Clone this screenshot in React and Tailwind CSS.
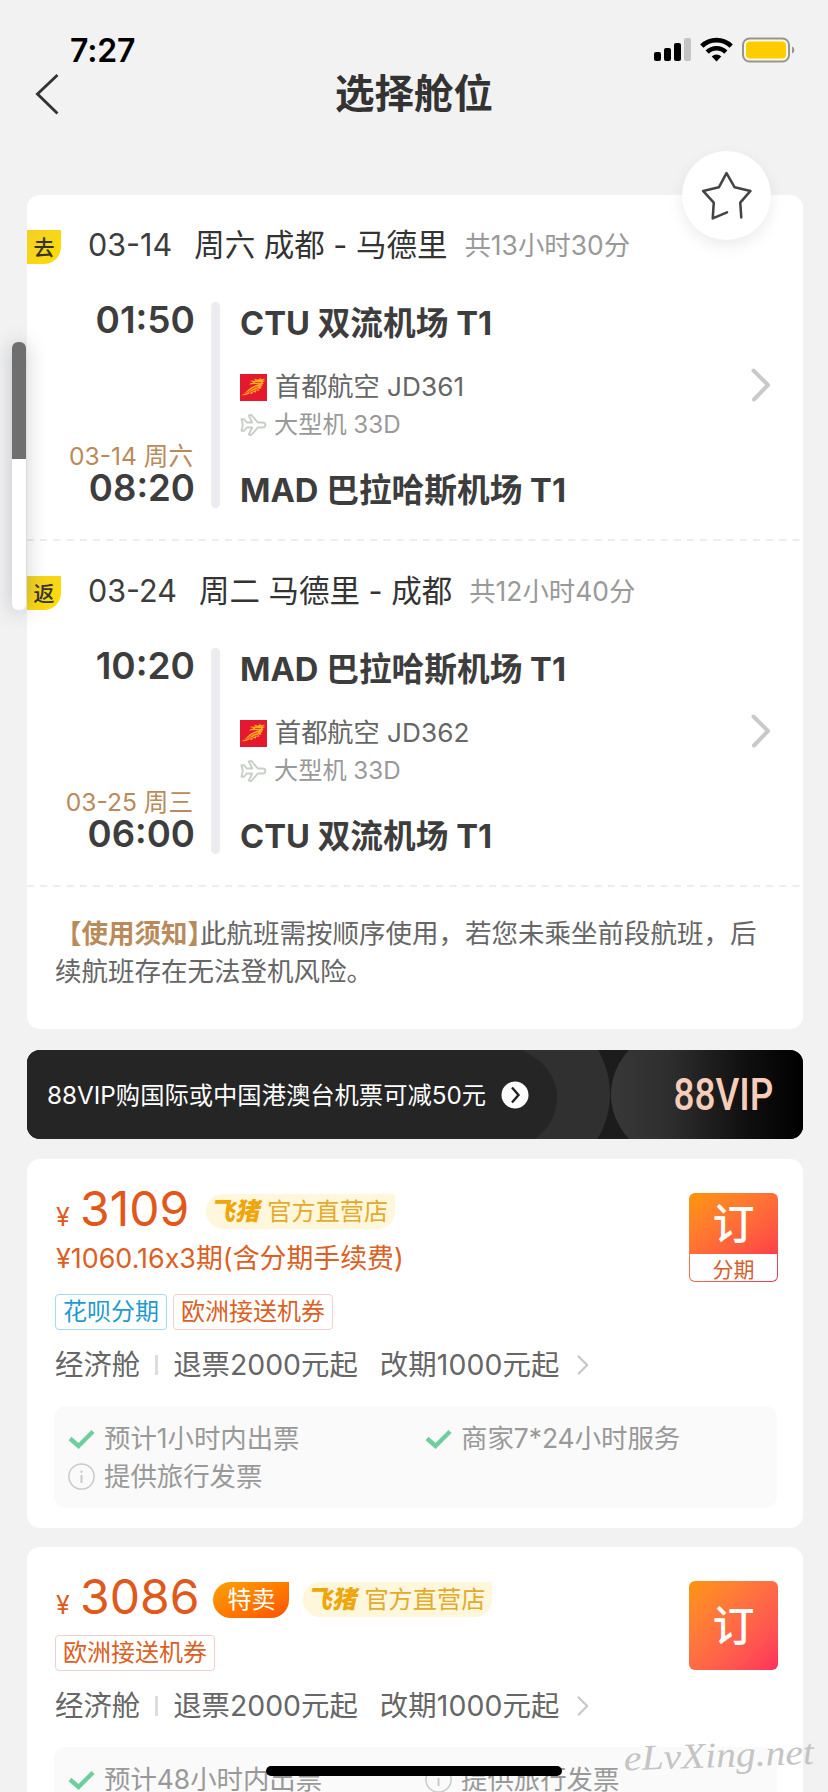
import React from 'react';

const legs = [
  {
    badge: '去',
    date: '03-14',
    day: '周六',
    route: '成都 - 马德里',
    duration: '共13小时30分',
    departTime: '01:50',
    departAirport: 'CTU 双流机场 T1',
    flight: '首都航空 JD361',
    plane: '大型机 33D',
    arriveDate: '03-14 周六',
    arriveTime: '08:20',
    arriveAirport: 'MAD 巴拉哈斯机场 T1'
  },
  {
    badge: '返',
    date: '03-24',
    day: '周二',
    route: '马德里 - 成都',
    duration: '共12小时40分',
    departTime: '10:20',
    departAirport: 'MAD 巴拉哈斯机场 T1',
    flight: '首都航空 JD362',
    plane: '大型机 33D',
    arriveDate: '03-25 周三',
    arriveTime: '06:00',
    arriveAirport: 'CTU 双流机场 T1'
  }
];

const offers = [
  {
    price: '3109',
    installment: '¥1060.16x3期(含分期手续费)',
    tags: [
      { label: '花呗分期', tone: 'blue' },
      { label: '欧洲接送机券', tone: 'orange' }
    ],
    services: [
      { label: '预计1小时内出票', icon: 'check' },
      { label: '商家7*24小时服务', icon: 'check' },
      { label: '提供旅行发票', icon: 'info' }
    ]
  },
  {
    price: '3086',
    onSale: true,
    tags: [{ label: '欧洲接送机券', tone: 'orange' }],
    services: [
      { label: '预计48小时内出票', icon: 'check' },
      { label: '提供旅行发票', icon: 'info' }
    ]
  }
];

const StatusBar = () => (
  <div className="flex h-[72px] items-start justify-between pl-[70px] pr-[33px] pt-[37px]">
    <span className="pt-px text-[32px] leading-[25px] font-semibold tracking-[-0.2px] text-black">7:27</span>
    <svg className="h-[26px] w-[142px]" viewBox="0 0 142 26">
      <rect x="1" y="15" width="7" height="9" rx="2" />
      <rect x="11" y="11" width="7" height="13" rx="2" />
      <rect x="21" y="6" width="7" height="18" rx="2" />
      <rect x="31" y="1" width="7" height="23" rx="2" fill="#c4c4c4" />
      <g fill="none" stroke="#000" strokeWidth="4.6">
        <path d="M48.8 9.2a20.8 20.8 0 0 1 29.4 0" />
        <path d="M54.2 15.1a13.2 13.2 0 0 1 18.6 0" />
      </g>
      <path d="M63.5 24.5l-4.8-4.9a6.8 6.8 0 0 1 9.6 0z" />
      <rect x="90" y="1.5" width="46" height="23" rx="6.5" fill="#fdfae8" stroke="#97958c" strokeWidth="2" />
      <rect x="93" y="4.5" width="40" height="17" rx="4" fill="#ffcc00" />
      <path d="M139 9.5c3 .8 3 6.2 0 7z" fill="#97958c" />
    </svg>
  </div>
);

const Header = () => (
  <div className="grid h-[123px] grid-cols-[1fr_auto_1fr] items-start">
    <svg className="ml-[34px] mt-px h-[42px] w-[26px]" viewBox="0 0 26 42" fill="none" stroke="#333" strokeWidth="2.9">
      <path d="M23.5 2L3.5 21l20 19.5" />
    </svg>
    <h1 className="pt-px text-[39.5px] leading-[42px] font-bold text-[#333]">选择舱位</h1>
    <span />
  </div>
);

const Chevron = ({ className }) => (
  <svg className={className} viewBox="0 0 20 34" fill="none" stroke="#c9c9c9" strokeWidth="4" strokeLinecap="round" strokeLinejoin="round">
    <path d="M2.5 2.5L17 17 3 31.5" />
  </svg>
);

const DashedLine = () => (
  <svg className="block h-[2px] w-full" viewBox="0 0 776 2">
    <line x1="0" y1="1" x2="776" y2="1" stroke="#ededed" strokeWidth="2" strokeDasharray="7 6.2" />
  </svg>
);

const AirlineLogo = () => (
  <svg className="h-[27px] w-[27px]" viewBox="0 0 27 27">
    <rect width="27" height="27" fill="#e4182e" />
    <path
      d="M1.5 21.5C5 19.5 7.500 16 11 13.500c2.500-1.800 5-2.500 8-3l-4-.500-6 .500c2-2 4-2.300 5.500-2.300L9.500 7c2.500-1 4.500-.500 6-.200L14 4.500l4 1.300 3-2.300-.800 2 4.800-1-2.500 2.300 3-.200-3.500 2.400 2 .500-2.800 1.500 2 1-3 .800 1.600 1.500-3 .700.500 1.800-3-.200-.500 2-2.500-.700-1.500 2.200-2.500-.800c-2.500 2-5.800 2.200-8.800 2z"
      fill="#ffae1f"
    />
    <path d="M4 20c5-1.500 6-5 14-7.500M9 18.500c3-.500 5-2.500 10-4M15 8.500l6 .2" fill="none" stroke="#e4182e" strokeWidth=".8" />
  </svg>
);

const PlaneIcon = () => (
  <svg className="h-[24px] w-[27px]" viewBox="0 0 27 24" fill="none" stroke="#c8cfc6" strokeWidth="1.9" strokeLinejoin="round">
    <path d="M1.500 6.200H4l2.800 3.300h5.400L8.800 2.500l2.400-.700 6.600 7.700h5c3.400 0 3.400 5 0 5h-5l-6.600 7.700-2.400-.700 3.400-7H6.800L4 17.800H1.500L2.800 12z" />
  </svg>
);

const FlightLeg = ({ leg }) => (
  <section className="flex h-[309px] flex-col">
    <div className="flex h-[34px] items-center whitespace-nowrap">
      <span className="flex h-[34px] w-[34px] items-center justify-center rounded-br-[17px] bg-gradient-to-br from-[#f3d021] to-[#ffdc00] text-[21px] leading-none font-medium text-[#333]">
        {leg.badge}
      </span>
      <div className="-mt-[4px] flex items-center leading-[34px]">
        <span className="ml-[27px] text-[30.5px] text-[#3d3d3d]">{leg.date}</span>
        <span className="ml-[22px] text-[30.5px] text-[#333]">
          {leg.day} {leg.route}
        </span>
        <span className="ml-[17px] text-[26.4px] text-[#999]">{leg.duration}</span>
      </div>
    </div>

    <div className="mt-[38px] flex h-[206px] pr-[32px]">
      <div className="flex w-[168px] flex-col items-end justify-between whitespace-nowrap pb-[4px]">
        <span className="text-[37px] leading-[36px] font-semibold text-[#3d3d3d]">{leg.departTime}</span>
        <div className="flex flex-col items-end">
          <span className="mr-[2px] text-[24.6px] leading-[34px] text-[#b98a5a]">{leg.arriveDate}</span>
          <span className="text-[36.6px] leading-[31px] font-semibold text-[#3d3d3d]">{leg.arriveTime}</span>
        </div>
      </div>
      <div className="ml-[16px] w-[9px] rounded-full bg-[#ebecf0]" />
      <div className="ml-[20px] flex flex-col whitespace-nowrap pt-[2px]">
        <span className="h-[38px] text-[32.7px] leading-[38px] font-bold text-[#3d3d3d]">{leg.departAirport}</span>
        <div className="mt-[26px] flex h-[38px] items-center gap-[8px]">
          <AirlineLogo />
          <span className="text-[26.2px] leading-[38px] text-[#666]">{leg.flight}</span>
        </div>
        <div className="flex h-[38px] items-center gap-[7px]">
          <PlaneIcon />
          <span className="text-[24.2px] leading-[38px] text-[#999]">{leg.plane}</span>
        </div>
        <span className="mt-[27px] h-[38px] text-[32.7px] leading-[38px] font-bold text-[#3d3d3d]">{leg.arriveAirport}</span>
      </div>
      <Chevron className="ml-auto mt-[66px] h-[34px] w-[20px]" />
    </div>
  </section>
);

const VipBanner = () => (
  <div className="relative mt-[21px] flex h-[89px] items-center overflow-hidden rounded-[13px] bg-[#1c1c1c]">
    <svg className="absolute inset-0 h-full w-full" viewBox="0 0 776 89">
      <defs>
        <linearGradient id="vipShine" x1="0" x2="1">
          <stop offset="0" stopColor="#383838" />
          <stop offset="0.3" stopColor="#2e2e2e" />
          <stop offset="0.7" stopColor="#101010" />
          <stop offset="1" stopColor="#000" />
        </linearGradient>
      </defs>
      <circle cx="496" cy="44" r="87" fill="#303030" />
      <path d="M0 0h494c20 8 36 25 36 47 0 17-8 32-22 42H0z" fill="#252525" />
      <path d="M602 0h174v89H602c-24-26-24-63 0-89z" fill="url(#vipShine)" />
    </svg>
    <span className="relative ml-[20px] whitespace-nowrap text-[24.3px] leading-[34px] text-white">
      88VIP购国际或中国港澳台机票可减50元
    </span>
    <svg className="relative ml-[15px] h-[28px] w-[28px]" viewBox="0 0 28 28">
      <circle cx="14" cy="14" r="13.5" fill="#fff" />
      <path d="M11 6.500l6.500 7.500-6.500 7.500" fill="none" stroke="#222" strokeWidth="2.4" />
    </svg>
    <span className="relative ml-auto mr-[30px] flex w-[102px] justify-end">
      <span className="origin-right scale-x-[0.83] text-[44.5px] leading-[60px] font-medium text-[#f6cdb9] font-[Roboto,sans-serif]">
        88VIP
      </span>
    </span>
  </div>
);

const ShopBadge = () => (
  <span className="flex h-[35px] w-[189px] items-center rounded-l-[17px] rounded-br-[17px] bg-[#fef7dc] pl-[6px]">
    <span className="inline-block w-[49px] -skew-x-12 text-[24.5px] leading-[35px] font-black text-[#efa50c]">
      飞猪
    </span>
    <span className="ml-[6px] text-[24.2px] leading-[35px] text-[#e5aa2c]">官方直营店</span>
  </span>
);

const Tag = ({ tag }) => (
  <span
    className={`flex h-[36px] items-center rounded-[4px] border px-[7px] text-[24px] leading-[34px]
      ${tag.tone === 'blue' ? 'border-[#a5d8ea] text-[#1f9bd0]' : 'border-[#f3cfcf] text-[#dc5f24]'}`}
  >
    {tag.label}
  </span>
);

const CheckIcon = () => (
  <svg className="h-[27px] w-[27px]" viewBox="0 0 27 27" fill="none" stroke="#6fcf9c" strokeWidth="4.4">
    <path d="M2 13.500l8.500 7.500L25 6.500" />
  </svg>
);

const InfoIcon = () => (
  <svg className="h-[27px] w-[27px]" viewBox="0 0 27 27" fill="none" stroke="#c6cbc9" strokeWidth="1.5">
    <circle cx="13.5" cy="13.5" r="12.6" />
    <path d="M13.500 12v8M13.500 7.500v2.200" strokeWidth="2" />
  </svg>
);

const BookButton = ({ installment }) => {
  if (!installment) {
    return (
      <button className="flex h-[89px] w-[89px] items-center justify-center rounded-[6px] bg-gradient-to-br from-[#ff9500] to-[#ff2e5b] text-[42px] leading-none font-medium text-white">
        订
      </button>
    );
  }
  return (
    <button className="flex h-[89px] w-[89px] flex-col rounded-[6px] bg-gradient-to-br from-[#ff9500] to-[#f0305a] p-px">
      <span className="flex h-[60px] w-full items-center justify-center rounded-t-[5px] bg-gradient-to-br from-[#ff9500] to-[#ff3e47] text-[42px] leading-none font-medium text-white">
        订
      </span>
      <span className="flex h-[27px] w-full items-center justify-center rounded-b-[5px] bg-white pt-[4px] text-[21px] leading-none text-[#d4602c]">
        分期
      </span>
    </button>
  );
};

const OfferCard = ({ offer }) => (
  <section className="rounded-[13px] bg-white px-[27px] pb-[20px] pt-[25px]">
    <div className="flex justify-between">
      <div>
        <div className="flex h-[52px] items-center pl-[2px] text-[#e0591b]">
          <span className="mt-[14px] w-[24px] text-[25px] leading-[26px]">¥</span>
          <span className="-mt-[2px] text-[48px] leading-[52px]">{offer.price}</span>
          {offer.onSale && (
            <span className="ml-[14px] mt-[3px] flex h-[36px] w-[76px] items-center justify-center rounded-l-[18px] rounded-br-[18px] bg-gradient-to-br from-[#ffa000] to-[#ff5000] text-[24px] text-white">
              特卖
            </span>
          )}
          <span className={`mt-[3px] ${offer.onSale ? 'ml-[14px]' : 'ml-[17px]'}`}>
            <ShopBadge />
          </span>
        </div>
        {offer.installment && (
          <div className="mt-[3px] pl-[2px] text-[26.9px] leading-[38px] text-[#dc5f24] [font-feature-settings:'calt'_0]">
            {offer.installment}
          </div>
        )}
        <div className={`flex gap-[6px] pl-px ${offer.installment ? 'mt-[17px]' : 'mt-[11px]'}`}>
          {offer.tags.map((tag) => (
            <Tag key={tag.label} tag={tag} />
          ))}
        </div>
      </div>
      <div className="-mr-[2px] mt-[9px]">
        <BookButton installment={offer.installment} />
      </div>
    </div>

    <div className="mt-[16px] flex h-[38px] items-center pl-px text-[28.4px] text-[#666]">
      <span>经济舱</span>
      <span className="mx-[15px] h-[20px] w-[3px] bg-[#ddd]" />
      <span>退票2000元起</span>
      <span className="ml-[22px] tracking-[0.1px]">改期1000元起</span>
      <Chevron className="ml-[18px] h-[20px] w-[12px]" />
    </div>

    <div className="mt-[22px] grid h-[102px] w-[723px] grid-cols-[357px_1fr] content-start rounded-[12px] bg-[#fafafa] pl-[14px] pt-[13px]">
      {offer.services.map((service) => (
        <div
          key={service.label}
          className="flex h-[38px] items-center gap-[9px] text-[26.4px] leading-[38px] text-[#999] [font-feature-settings:'calt'_0]"
        >
          {service.icon === 'check' ? <CheckIcon /> : <InfoIcon />}
          <span>{service.label}</span>
        </div>
      ))}
    </div>
  </section>
);

export default function App() {
  return (
    <div className="relative h-[1792px] w-[828px] overflow-hidden bg-[#f2f2f2] font-['Inter','Noto_Sans_CJK_SC',sans-serif]">
      <StatusBar />
      <Header />

      <main className="pl-[27px] pr-[25px]">
        <div className="relative h-[834px] rounded-[13px] bg-white pt-[35px]">
          {legs.map((leg, i) => (
            <div key={leg.badge} className={i > 0 ? 'pt-[35px]' : ''}>
              <FlightLeg leg={leg} />
              <DashedLine />
            </div>
          ))}
          <p className="mt-[27px] whitespace-nowrap pl-[28px] text-[26.5px] leading-[38px] text-[#666]">
            <span className="font-bold text-[#b98a5a]">【使用须知】</span>
            <span className="-ml-[14px]">此航班需按顺序使用，若您未乘坐前段航班，后</span>
            <br />
            续航班存在无法登机风险。
          </p>
          <button className="absolute -top-[44px] left-[655px] flex h-[89px] w-[89px] items-center justify-center rounded-full bg-white shadow-[0_6px_16px_rgba(0,0,0,0.08)]">
            <svg className="h-[53px] w-[53px]" viewBox="0 0 52 52" fill="none" stroke="#444" strokeWidth="2.5" strokeLinecap="round" strokeLinejoin="round">
              <path d="M26.500 42.500L12.500 48.500 13.500 33 3 21.500 18.500 18 26 4l8 14 15.500 3.500L39.500 33l1 14.500" />
            </svg>
          </button>
        </div>

        <VipBanner />

        <div className="mt-[20px] flex flex-col gap-[19px]">
          {offers.map((offer) => (
            <OfferCard key={offer.price} offer={offer} />
          ))}
        </div>
      </main>

      {/* Side scroll handle */}
      <div className="absolute left-[12px] top-[342px] flex h-[268px] w-[14px] flex-col overflow-hidden rounded-[6px] bg-white shadow-[0_2px_20px_rgba(60,70,90,0.3)]">
        <div className="h-[117px] bg-[#6f6f6f]" />
      </div>

      <svg className="absolute left-[622px] top-[1732px] h-[52px] w-[200px]" viewBox="0 0 200 52">
        <text x="2" y="35" textLength="190" lengthAdjust="spacingAndGlyphs" transform="rotate(-2 100 26)" fill="#c4c4c4" fontSize="36" fontStyle="italic" fontFamily="'Liberation Serif', serif">
          eLvXing.net
        </text>
      </svg>

      <div className="absolute bottom-[16px] left-[266px] h-[10px] w-[296px] rounded-full bg-black" />
    </div>
  );
}
